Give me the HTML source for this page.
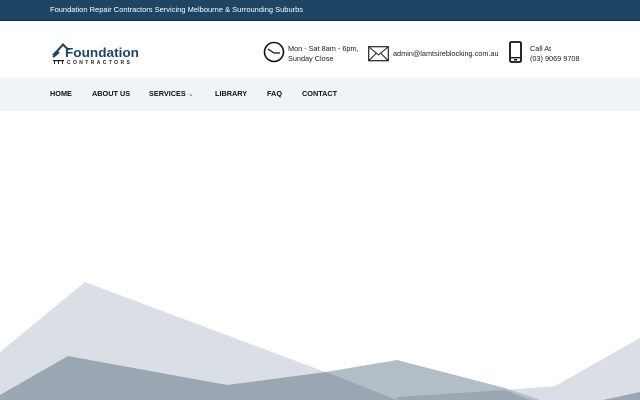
<!DOCTYPE html>
<html><head><style>
body{margin:0;width:640px;height:400px;overflow:hidden;background:#fff;font-family:"Liberation Sans",sans-serif;position:relative}
.top{height:20px;background:#1d4666;border-bottom:1px solid #0e2a40;color:#fff;font-size:7.5px;line-height:20px;padding-left:50px}
.head{height:57px;position:relative}
.nav{height:33px;background:#eff4f7;font-size:7.3px;font-weight:bold;color:#111;position:relative}
.nav span{position:absolute;top:11px}
.info{position:absolute;font-size:7.3px;color:#222;line-height:10px}
svg.w{position:absolute;left:0;top:0}
</style></head><body>
<div class="top">Foundation Repair Contractors Servicing Melbourne &amp; Surrounding Suburbs</div>
<div class="head">
<svg width="100" height="30" style="position:absolute;left:50px;top:18px">
<path d="M2 16 L13 4 L20 11 L17 11 L13 7 L5 16Z" fill="#1d4666"/>
<path d="M3 18 L9 13" stroke="#1d4666" stroke-width="2.2"/>
<rect x="3" y="21" width="11" height="1.2" fill="#222"/>
<rect x="4" y="21" width="1" height="4" fill="#222"/><rect x="8" y="21" width="1" height="4" fill="#222"/><rect x="12" y="21" width="1" height="4" fill="#222"/>
<text x="15" y="18" font-family="Liberation Sans" font-size="12.5" font-weight="bold" fill="#1d4666" textLength="74" lengthAdjust="spacingAndGlyphs">Foundation</text>
<text x="17" y="25" font-family="Liberation Sans" font-size="5" letter-spacing="2.4" font-weight="bold" fill="#222">CONTRACTORS</text>
</svg>
<svg width="24" height="24" style="position:absolute;left:263px;top:20px"><circle cx="11" cy="11" r="9.5" fill="none" stroke="#111" stroke-width="1.6"/><path d="M5 8 L11 12 L17 12" fill="none" stroke="#111" stroke-width="1.3"/></svg>
<div class="info" style="left:288px;top:23px">Mon - Sat 8am - 6pm,<br>Sunday Close</div>
<svg width="22" height="16" style="position:absolute;left:368px;top:25px"><rect x="0.7" y="0.7" width="19.6" height="14" fill="none" stroke="#222" stroke-width="1.2"/><path d="M1 1 L10.5 9 L20 1 M1 14.5 L8 7.5 M20 14.5 L13 7.5" fill="none" stroke="#222" stroke-width="1"/></svg>
<div class="info" style="left:393px;top:28px">admin@lamtsireblocking.com.au</div>
<svg width="14" height="22" style="position:absolute;left:509px;top:20px"><rect x="1" y="1" width="11" height="20" rx="1.5" fill="none" stroke="#111" stroke-width="1.8"/><rect x="2" y="16" width="9" height="1.3" fill="#111"/><rect x="5" y="18" width="3" height="1.5" fill="#111"/></svg>
<div class="info" style="left:530px;top:23px">Call At<br>(03) 9069 9708</div>
</div>
<div class="nav">
<span style="left:50px">HOME</span><span style="left:92px">ABOUT US</span><span style="left:149px">SERVICES <span style="position:static;font-weight:normal;color:#666">⌄</span></span><span style="left:215px">LIBRARY</span><span style="left:267px">FAQ</span><span style="left:302px">CONTACT</span>
</div>
<svg class="w" width="640" height="400">
<polygon points="0,352 85,282 400,400 0,400" fill="#d9dfe4"/>
<polygon points="640,338 555,386 505,390 505,400 640,400" fill="#d9dfe4"/>
<polygon points="326,372 397,360 505,388 540,400 326,400" fill="#b3bdc6"/>
<polygon points="0,395 68,356 227,385 326,372 397,400 0,400" fill="#9aa7b3"/>
<polygon points="397,397 505,390 530,400 397,400" fill="#9aa7b3"/>
<polygon points="603,400 640,392 640,400" fill="#9aa7b3"/>
</svg>
</body></html>
